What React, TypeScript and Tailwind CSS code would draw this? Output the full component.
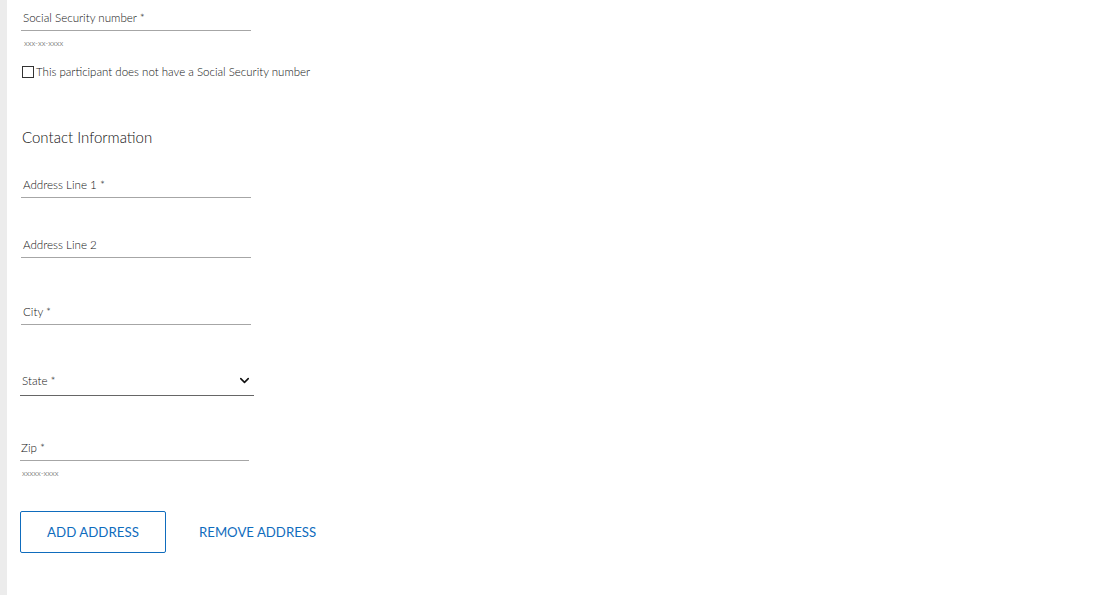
import { ChevronDown } from 'lucide-react';
import React from 'react';

const font = { fontFamily: 'Lato, "Open Sans", sans-serif' };

interface FieldProps {
  label: string;
  className?: string;
}

const TextField: React.FC<FieldProps> = ({ label, className = '' }) => (
  <div className={`border-b border-[#a6a6a6] ${className}`}>
    <div className="h-[16px] leading-[16px] text-[11.6px] text-[#111] pl-[2px] mb-[4px]">{label}</div>
  </div>
);

export default function App() {
  return (
    <div className="flex min-h-[595px] bg-white font-light" style={font}>
      <div className="w-[7px] shrink-0 bg-[#ececec]" />
      <div className="flex-1 pl-[14px]">
        <TextField label="Social Security number *" className="w-[230px] mt-[10px]" />
        <div className="mt-[6px] h-[12px] leading-[12px] text-[8px] text-[#444] pl-[3px]">xxx-xx-xxxx</div>
        <label className="mt-[16px] flex items-center h-[13px] text-[11.5px] text-[#111]">
          <span className="ml-[1px] w-[12px] h-[12px] border border-[#333] bg-white" />
          <span className="ml-[2px]">This participant does not have a Social Security number</span>
        </label>

        <h2 className="mt-[49px] h-[20px] leading-[20px] text-[15px] text-[#111] pl-[1px]">Contact Information</h2>

        <TextField label="Address Line 1 *" className="w-[230px] mt-[30px]" />
        <TextField label="Address Line 2" className="w-[230px] mt-[39px]" />
        <TextField label="City *" className="w-[230px] mt-[46px]" />

        <div className="-ml-[1px] mt-[48px] w-[234px] border-b border-[#666] flex items-start justify-between">
          <div className="h-[16px] leading-[16px] text-[11.6px] text-[#111] pl-[2px] mb-[6px]">State *</div>
          <ChevronDown className="w-[15px] h-[15px] mt-[0px] mr-[2px] text-[#111]" strokeWidth={2.5} />
        </div>

        <TextField label="Zip *" className="-ml-[1px] w-[229px] mt-[44px] [&>div]:pl-[1px]" />
        <div className="mt-[6px] h-[12px] leading-[12px] text-[8px] text-[#444] pl-[1px]">xxxxx-xxxx</div>

        <div className="-ml-[1px] mt-[32px] flex items-center">
          <button className="w-[146px] h-[42px] pt-[1px] border border-[#0f6cbd] rounded-[2px] text-[13.3px] font-normal text-[#0f6cbd] bg-white">
            ADD ADDRESS
          </button>
          <button className="ml-[33px] pt-[2px] text-[13.2px] font-normal text-[#0f6cbd]">REMOVE ADDRESS</button>
        </div>
      </div>
    </div>
  );
}
